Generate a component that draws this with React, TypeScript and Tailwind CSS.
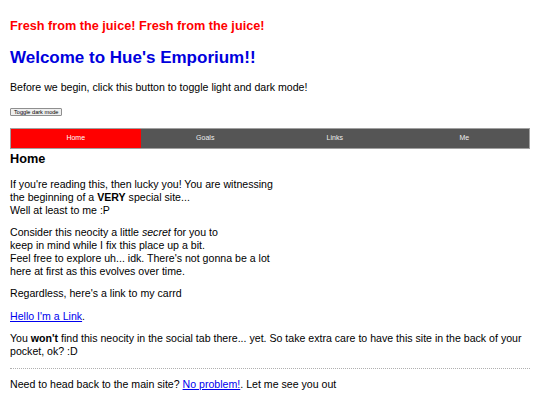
export default function App() {
  const tabs = ["Home", "Goals", "Links", "Me"];

  return (
    <div className="min-h-[405px] bg-white px-[10px] pt-[19px] pb-4 font-['Liberation_Sans',Arial,sans-serif] text-black">
      <h3 className="text-[12.7px] leading-[15px] font-bold text-[#ff0000]">
        Fresh from the juice! Fresh from the juice!
      </h3>
      <h1 className="mt-[13.5px] text-[17px] leading-[20px] font-bold text-[#0000dd]">
        Welcome to Hue's Emporium!!
      </h1>
      <p className="mt-[13px] text-[10.6px] leading-[13px]">
        Before we begin, click this button to toggle light and dark mode!
      </p>

      <button className="mt-[14px] block h-[8.5px] rounded-[1px] border border-[#8f8f8f] bg-[#efefef] px-[3px] text-[5.6px] leading-[6px]">
        Toggle dark mode
      </button>

      {/* nav */}
      <nav className="mt-[11.5px] grid h-[21px] grid-cols-4 border border-[#a0a0a0] bg-[#555555]">
        {tabs.map((t, i) => (
          <a
            key={t}
            className={
              "flex items-center justify-center text-[7px] text-[#eeeeee] " +
              (i === 0 ? "bg-[#ff0000] text-white" : "")
            }
          >
            {t}
          </a>
        ))}
      </nav>

      <h3 className="mt-[3.5px] text-[12.7px] leading-[15px] font-bold">Home</h3>

      <div className="text-[10.6px] leading-[13px]">
        <p className="mt-[11px]">
          If you're reading this, then lucky you! You are witnessing
          <br />
          the beginning of a <b>VERY</b> special site...
          <br />
          Well at least to me :P
        </p>
        <p className="mt-[9px]">
          Consider this neocity a little <i>secret</i> for you to
          <br />
          keep in mind while I fix this place up a bit.
          <br />
          Feel free to explore uh... idk. There's not gonna be a lot
          <br />
          here at first as this evolves over time.
        </p>
        <p className="mt-[9px]">Regardless, here's a link to my carrd</p>
        <p className="mt-[9.5px]">
          <a className="text-[#0000ee] underline">Hello I'm a Link</a>.
        </p>
        <p className="mt-[9.5px]">
          You <b>won't</b> find this neocity in the social tab there... yet. So take extra care to have this site in the
          back of your pocket, ok? :D
        </p>
        <hr className="mt-[9.5px] border-0 border-t border-dotted border-[#b0b0b0]" />
        <p className="mt-[9px]">
          Need to head back to the main site? <a className="text-[#0000ee] underline">No problem!</a>. Let me see you
          out
        </p>
      </div>
    </div>
  );
}
